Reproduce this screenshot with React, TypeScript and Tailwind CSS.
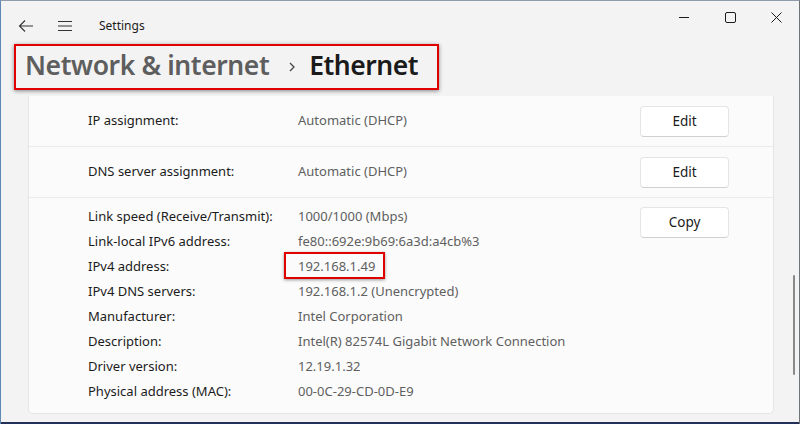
import React from "react";

const font = { fontFamily: '"Noto Sans", "Open Sans", sans-serif' };

function Btn({ label }: { label: string }) {
  return (
    <button className="w-[89px] h-[31px] bg-white border border-[#e5e5e5] border-b-[#d0d0d0] rounded-[4px] text-[13.5px] text-[#1b1b1b]">
      {label}
    </button>
  );
}

const props: [string, string][] = [
  ["Link speed (Receive/Transmit):", "1000/1000 (Mbps)"],
  ["Link-local IPv6 address:", "fe80::692e:9b69:6a3d:a4cb%3"],
  ["IPv4 address:", "192.168.1.49"],
  ["IPv4 DNS servers:", "192.168.1.2 (Unencrypted)"],
  ["Manufacturer:", "Intel Corporation"],
  ["Description:", "Intel(R) 82574L Gigabit Network Connection"],
  ["Driver version:", "12.19.1.32"],
  ["Physical address (MAC):", "00-0C-29-CD-0D-E9"],
];

export default function App() {
  return (
    <div
      style={font}
      className="relative w-[800px] h-[424px] overflow-hidden bg-[#f3f3f3] border-l border-l-[#5f88b3] border-t border-t-[#8e9cab] border-r border-r-[#6e7378]"
    >
      {/* title bar */}
      <div className="flex items-start h-[43px]">
        <div className="flex items-center h-[50px] pl-[16px]">
          <svg width="18" height="18" viewBox="0 0 18 18" className="text-[#333]">
            <path d="M16 9H2.5M8 3.5 2.5 9 8 14.5" fill="none" stroke="currentColor" strokeWidth="1.1" />
          </svg>
          <svg width="16" height="14" viewBox="0 0 16 14" className="ml-[22px] text-[#333]">
            <path d="M1 2.5h14M1 7h14M1 11.5h14" fill="none" stroke="currentColor" strokeWidth="1.1" />
          </svg>
          <span className="ml-[26px] text-[12px] text-[#1b1b1b]">Settings</span>
        </div>
        <div className="ml-auto flex h-[32px] items-center">
          <div className="w-[46px] h-[32px] flex items-center justify-center">
            <svg width="10" height="10" viewBox="0 0 10 10">
              <path d="M0 5.5h10" stroke="#1b1b1b" strokeWidth="1" />
            </svg>
          </div>
          <div className="w-[46px] h-[32px] flex items-center justify-center">
            <svg width="11" height="11" viewBox="0 0 11 11">
              <rect x="0.5" y="0.5" width="10" height="10" rx="1.5" fill="none" stroke="#1b1b1b" strokeWidth="1" />
            </svg>
          </div>
          <div className="w-[46px] h-[32px] flex items-center justify-center">
            <svg width="11" height="11" viewBox="0 0 11 11">
              <path d="M0.5 0.5l10 10M10.5 0.5l-10 10" stroke="#1b1b1b" strokeWidth="1" />
            </svg>
          </div>
        </div>
      </div>

      {/* breadcrumb */}
      <div className="ml-[13px] w-[425px] h-[46px] border-2 border-[#e10000] shadow-[0_1px_4px_rgba(0,0,0,0.45)] flex items-center pl-[9px] pb-[3px]">
        <span className="text-[26.5px] font-semibold text-[#5e5e5e] tracking-[-0.4px]">Network &amp; internet</span>
        <svg width="10" height="12" viewBox="0 0 10 12" className="ml-[18px] mr-[12px] mt-[3px]">
          <path d="M3 2l4 4-4 4" fill="none" stroke="#444" strokeWidth="1.3" />
        </svg>
        <span className="text-[26.5px] font-semibold text-[#1a1a1a] tracking-[-0.5px]">Ethernet</span>
      </div>

      {/* content */}
      <div className="mt-[6px] ml-[27px] w-[746px] bg-[#fbfbfb] border-x border-b border-[#e5e5e5] rounded-b-[5px] text-[13px]">
        <div className="flex items-center h-[51px] border-b border-[#ebebeb] pl-[59px] pr-[44px]">
          <span className="w-[210px] text-[#1b1b1b]">IP assignment:</span>
          <span className="text-[#5f5f5f]">Automatic (DHCP)</span>
          <div className="ml-auto">
            <Btn label="Edit" />
          </div>
        </div>
        <div className="flex items-center h-[51px] border-b border-[#ebebeb] pl-[59px] pr-[44px]">
          <span className="w-[210px] text-[#1b1b1b]">DNS server assignment:</span>
          <span className="text-[#5f5f5f]">Automatic (DHCP)</span>
          <div className="ml-auto">
            <Btn label="Edit" />
          </div>
        </div>
        <div className="relative flex pl-[59px] pr-[44px] pt-[6px] pb-[8px]">
          <div className="flex flex-col">
            {props.map(([k, v]) => (
              <div key={k} className="flex items-center h-[25.1px]">
                <span className="w-[210px] text-[#1b1b1b]">{k}</span>
                <span className="text-[#5f5f5f]">{v}</span>
              </div>
            ))}
          </div>
          <div className="ml-auto pt-[3px]">
            <Btn label="Copy" />
          </div>
          {/* highlight box */}
          <div className="absolute left-[255px] top-[54px] w-[101px] h-[27px] border-2 border-[#e10000] shadow-[0_1px_3px_rgba(0,0,0,0.4)]" />
        </div>
      </div>

      {/* scrollbar */}
      <div className="absolute right-[4px] top-[274px] w-[2px] h-[100px] bg-[#8a8a8a] rounded-full" />
      {/* desktop strip */}
      <div className="absolute left-0 right-0 bottom-0 h-[2px] bg-[#22305a]" />
    </div>
  );
}
